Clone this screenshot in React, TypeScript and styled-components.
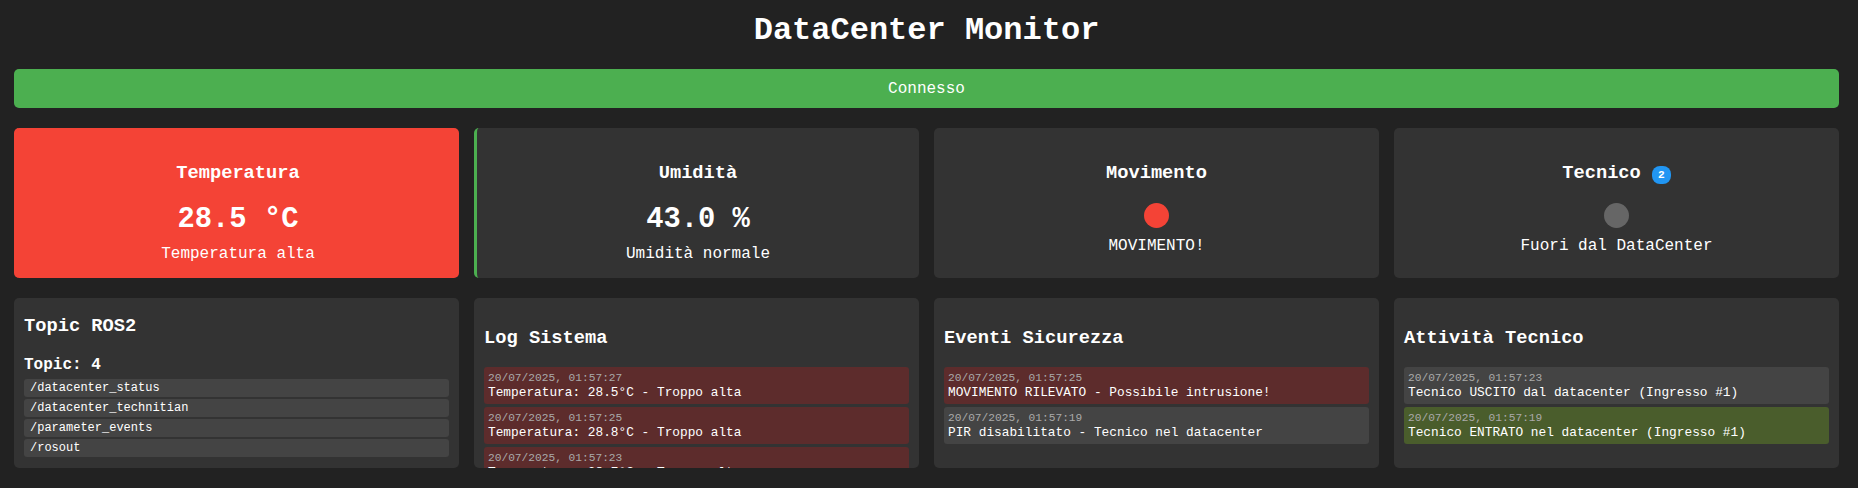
import React from 'react';
import styled, { createGlobalStyle, css } from 'styled-components';

const Global = createGlobalStyle`
  body { margin: 0; background: #222; color: #fff; font-family: "Liberation Mono", monospace; }
  html { overflow: hidden; }
`;
const Page = styled.main`padding: 11px 19px 0 14px;`;
const Title = styled.h1`margin: 0 0 19px; text-align: center; font-size: 32px; line-height: 39px;`;
const Status = styled.div`
  background: #4caf50; border-radius: 5px; padding: 11px 10px 10px; line-height: 18px; text-align: center; margin-bottom: 20px;
`;
const Grid = styled.div`display: grid; grid-template-columns: repeat(4, 1fr); gap: 15px; margin-bottom: 20px;`;
const Card = styled.section<{ $tone?: 'alert' | 'ok' }>`
  box-sizing: border-box; height: 150px; padding: 15px; border-radius: 5px; background: #333; text-align: center;
  ${p => p.$tone === 'alert' && css`background: #f44336; border-left: 3px solid #f44336;`}
  ${p => p.$tone === 'ok' && css`border-left: 3px solid #4caf50;`}
`;
const CardTitle = styled.h3`margin: 19px 0; font-size: 18.72px; line-height: 22px;`;
const Value = styled.div`font-size: 28.8px; font-weight: bold; line-height: 33px; margin: 9px 0;`;
const Caption = styled.div`font-size: 16px; line-height: 18px;`;
const Dot = styled.div<{ $color: string }>`
  width: 25px; height: 25px; border-radius: 50%; background: ${p => p.$color}; margin: 0 auto 9px;
`;
const Badge = styled.span`
  display: inline-block; background: #2196f3; border-radius: 8px; padding: 3px 6px; font-size: 11.2px; line-height: 12px;
`;
const Panel = styled.section`
  box-sizing: border-box; height: 170px; padding: 10px; border-radius: 5px; background: #333; overflow: hidden;
`;
const PanelTitle = styled.h3<{ $compact?: boolean }>`
  margin: ${p => (p.$compact ? '7px 0 19px' : '19px 0 18px')}; font-size: 18.72px; line-height: 22px;
`;
const Count = styled.div`font-weight: bold; line-height: 18px; margin-bottom: 5px;`;
const Topic = styled.div`
  background: #444; border-radius: 3px; padding: 2px 6px; font-size: 12px; line-height: 14px; margin-bottom: 2px;
`;
const Entry = styled.div<{ $kind?: 'alarm' | 'enter' }>`
  background: ${p => (p.$kind === 'alarm' ? '#5d2c2c' : p.$kind === 'enter' ? '#4a5d2c' : '#444')};
  border-radius: 3px; padding: 4px; margin-bottom: 3px; font-size: 12.8px; line-height: 15px;
`;
const Time = styled.div`color: #aaa; font-size: 11.2px; line-height: 14px;`;

type Item = { time: string; text: string; kind?: 'alarm' | 'enter' };
const logs: { title: string; items: Item[] }[] = [
  { title: 'Log Sistema', items: [
    { time: '20/07/2025, 01:57:27', text: 'Temperatura: 28.5°C - Troppo alta', kind: 'alarm' },
    { time: '20/07/2025, 01:57:25', text: 'Temperatura: 28.8°C - Troppo alta', kind: 'alarm' },
    { time: '20/07/2025, 01:57:23', text: 'Temperatura: 28.7°C - Troppo alta', kind: 'alarm' },
  ] },
  { title: 'Eventi Sicurezza', items: [
    { time: '20/07/2025, 01:57:25', text: 'MOVIMENTO RILEVATO - Possibile intrusione!', kind: 'alarm' },
    { time: '20/07/2025, 01:57:19', text: 'PIR disabilitato - Tecnico nel datacenter' },
  ] },
  { title: 'Attività Tecnico', items: [
    { time: '20/07/2025, 01:57:23', text: 'Tecnico USCITO dal datacenter (Ingresso #1)' },
    { time: '20/07/2025, 01:57:19', text: 'Tecnico ENTRATO nel datacenter (Ingresso #1)', kind: 'enter' },
  ] },
];
const topics = ['/datacenter_status', '/datacenter_technitian', '/parameter_events', '/rosout'];

export default function App() {
  return (
    <>
      <Global />
      <Page>
        <Title>DataCenter Monitor</Title>
        <Status>Connesso</Status>
        <Grid>
          <Card $tone="alert"><CardTitle>Temperatura</CardTitle><Value>28.5 °C</Value><Caption>Temperatura alta</Caption></Card>
          <Card $tone="ok"><CardTitle>Umidità</CardTitle><Value>43.0 %</Value><Caption>Umidità normale</Caption></Card>
          <Card><CardTitle>Movimento</CardTitle><Dot $color="#f44336" /><Caption>MOVIMENTO!</Caption></Card>
          <Card><CardTitle>Tecnico <Badge>2</Badge></CardTitle><Dot $color="#666" /><Caption>Fuori dal DataCenter</Caption></Card>
        </Grid>
        <Grid>
          <Panel>
            <PanelTitle $compact>Topic ROS2</PanelTitle>
            <Count>Topic: 4</Count>
            {topics.map(t => <Topic key={t}>{t}</Topic>)}
          </Panel>
          {logs.map(l => (
            <Panel key={l.title}>
              <PanelTitle>{l.title}</PanelTitle>
              {l.items.map(i => <Entry key={i.time} $kind={i.kind}><Time>{i.time}</Time>{i.text}</Entry>)}
            </Panel>
          ))}
        </Grid>
      </Page>
    </>
  );
}
